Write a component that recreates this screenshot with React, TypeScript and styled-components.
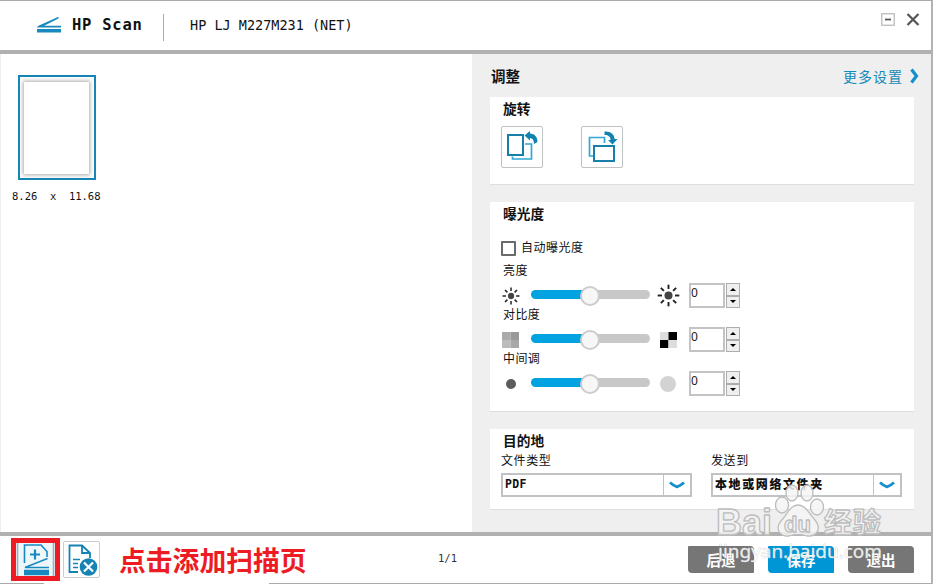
import React from "react";
import styled, { createGlobalStyle } from "styled-components";

const cjk = '"Noto Sans CJK SC", sans-serif';
const mono = '"DejaVu Sans Mono", "Noto Sans CJK SC", monospace';

const GlobalStyle = createGlobalStyle`
  * { box-sizing: border-box; }
  body { margin: 0; background: #fff; font-family: ${cjk}; color: #111; }
  button { padding: 0; font: inherit; }
  svg { display: block; flex: none; }
`;

const Window = styled.div`
  position: relative;
  width: 933px;
  height: 584px;
  overflow: hidden;
  display: flex;
  flex-direction: column;
  background: #fff;
  border-top: 1px solid #aaa;
  border-right: 2px solid #b2b2b2;
`;

const Header = styled.header`
  height: 53px;
  flex: none;
  display: flex;
  align-items: flex-start;
  padding: 0 11px 0 37px;
  border-bottom: 4px solid #b0b0b0;
`;

const Logo = styled.svg`
  margin-top: 15px;
`;

const Brand = styled.h1`
  margin: 14px 0 0 10px;
  width: 91px;
  font: bold 15.5px/20px ${mono};
  letter-spacing: 0.75px;
  white-space: nowrap;
`;

const HeaderDivider = styled.div`
  width: 1px;
  height: 27px;
  margin-top: 13px;
  background: #aaa;
`;

const Device = styled.div`
  margin: 14px auto 0 26px;
  font: 13.5px/20px ${mono};
  white-space: pre;
`;

const WindowControls = styled.div`
  display: flex;
  align-items: center;
  gap: 11px;
  margin-top: 11px;
`;

const Main = styled.main`
  height: 478px;
  flex: none;
  display: grid;
  grid-template-columns: 472px 1fr;
`;

const Preview = styled.section`
  padding: 21px 0 0 12px;
  border-left: 1px solid #eee;
`;

const Thumb = styled.div`
  width: 78px;
  height: 105px;
  margin-left: 5px;
  padding: 5px 5px 4px 4px;
  border: 2px solid #1585b5;
  background: #fff;
`;

const Sheet = styled.div`
  height: 100%;
  background: #fff;
  box-shadow: 0 0 4px 1px #aaa;
`;

const PageSize = styled.div`
  margin-top: 9px;
  margin-left: -1px;
  font: 10.5px/14px ${mono};
  white-space: pre;
`;

const Settings = styled.aside`
  padding: 0 18px;
  background: #efefef;
`;

const SettingsHead = styled.div`
  height: 43px;
  display: flex;
  align-items: center;
  justify-content: space-between;
  margin-right: -6px;
  padding-left: 1px;
`;

const Heading = styled.h2`
  margin: 0;
  font: bold 14.5px/20px ${cjk};
`;

const More = styled.a`
  display: flex;
  align-items: center;
  gap: 7px;
  color: #138ab8;
  font: 14px/20px ${cjk};
  letter-spacing: 1px;
`;

const Card = styled.section<{ $height: number }>`
  width: 424px;
  height: ${(p) => p.$height}px;
  margin-bottom: 17px;
  padding-left: 11px;
  background: #fff;
  border-bottom: 1px solid #dedede;
`;

const CardTitle = styled.h3`
  margin: 0;
  padding-left: 2px;
  font: bold 13.7px/22px ${cjk};
`;

const RotateRow = styled.div`
  display: flex;
  gap: 38px;
  margin-top: 7px;
`;

const RotateButton = styled.button`
  width: 42px;
  height: 42px;
  border: 1px solid #bfc3c4;
  border-radius: 2px;
  background: #fff;
`;

const AutoRow = styled.label`
  display: flex;
  gap: 5px;
  height: 18px;
  margin: 16px 0 6px;
  font: 12px/14px ${cjk};
  letter-spacing: 0.5px;
`;

const Checkbox = styled.span`
  width: 15px;
  height: 15px;
  margin-top: 1px;
  border: 2px solid #6a6a6a;
  border-radius: 1px;
  background: #fff;
`;

const SliderLabel = styled.div`
  height: 12px;
  padding-left: 2px;
  font: 12px/12px ${cjk};
  letter-spacing: 0.4px;
`;

const SliderRow = styled.div`
  display: grid;
  grid-template-columns: 30px 125px 33px 37px 14px;
  height: 25px;
  margin-top: 7px;
  align-items: center;
`;

const Track = styled.div`
  width: 119px;
  height: 9px;
  margin-top: -2px;
  display: flex;
  align-items: center;
  border-radius: 5px;
  background: linear-gradient(to right, #00a2e0 50%, #c8c8c8 50%);
`;

const Knob = styled.span`
  width: 20px;
  height: 20px;
  margin: 3px 0 0 49px;
  flex: none;
  border: 2px solid #ccc;
  border-radius: 50%;
  background: #f7f7f7;
`;

const NumberBox = styled.div`
  width: 36px;
  height: 25px;
  border: 2px solid #c4c4c4;
  font: 12px/15px "Noto Sans", sans-serif;
  color: #222;
`;

const Stepper = styled.div`
  display: grid;
  grid-template-rows: 1fr 1fr;
  height: 25px;
`;

const Step = styled.button`
  display: grid;
  place-items: center;
  border: 1px solid #adadad;
  background: #efefef;
`;

const FieldRow = styled.div`
  display: flex;
  gap: 19px;
`;

const Field = styled.div`
  width: 191px;
`;

const FieldLabel = styled.div`
  height: 18px;
  margin-bottom: 4px;
  font: 12px/18px ${cjk};
  letter-spacing: 0.6px;
`;

const Select = styled.div`
  height: 24px;
  display: flex;
  border: 2px solid #c0c2c3;
`;

const SelectValue = styled.div<{ $mono?: boolean }>`
  flex: 1;
  padding-left: 2px;
  font: ${(p) => (p.$mono ? `bold 11.5px/19px ${mono}` : `900 12px/18px ${cjk}`)};
  letter-spacing: ${(p) => (p.$mono ? 0.3 : 1.6)}px;
`;

const SelectArrow = styled.div`
  width: 27px;
  display: grid;
  place-items: center;
  border-left: 1px solid #c0c2c3;
`;

const Footer = styled.footer`
  flex: 1;
  display: flex;
  align-items: flex-start;
  border-top: 4px solid #b0b0b0;
  padding: 2px 17px 0 11px;
`;

const AddButton = styled.button`
  width: 49px;
  height: 43px;
  border: 5px solid #ed1c24;
  background: #edf6f9;
`;

const DeleteButton = styled.button`
  width: 37px;
  height: 37px;
  margin: 3px 0 0 3px;
  border: 1px solid #ccc;
  border-radius: 2px;
  background: #fff;
`;

const Annotation = styled.div`
  width: 188px;
  margin: 4px 0 0 19px;
  color: #ed1c24;
  font: bold 26.8px/36px ${cjk};
  white-space: nowrap;
`;

const PageCount = styled.div`
  margin: 13px auto 0 131px;
  font: 10.5px/14px ${mono};
  color: #333;
`;

const Actions = styled.div`
  display: flex;
  gap: 14px;
  margin-top: 8px;
`;

const Action = styled.button<{ $primary?: boolean }>`
  width: 66px;
  height: 27px;
  border: 0;
  border-radius: 1px 4px 1px 4px;
  background: ${(p) => (p.$primary ? "#0096d6" : "#767676")};
  color: #fff;
  font: bold 14.5px/25px ${cjk};
`;

const BottomEdge = styled.div`
  height: 1px;
  flex: none;
  background: linear-gradient(to right, #aaa 44px, #fff 44px 269px, #aaa 269px);
`;

const Watermark = styled.svg`
  position: absolute;
  left: 708px;
  top: 479px;
  pointer-events: none;
`;

const ScanLogo = () => (
  <Logo width="25" height="18" viewBox="0 0 25 18" fill="#1689c0">
    <path d="M1 10 21.500 .8V2.500L7 9.700H24V11.500H0z" />
    <path d="M0 13H24V16.500H0z" />
  </Logo>
);

const RotateLeft = () => (
  <svg width="40" height="40" viewBox="0 0 40 40" fill="none">
    <path d="M23 17H29.500V32H10.500V29.500" stroke="#32a8d4" strokeWidth="1.700" />
    <path d="M6 8H21V28H6z" stroke="#187faa" strokeWidth="2" />
    <path d="M22.500 8.500 28 4V6.500C32.500 6.500 35.500 10 35.500 15L32 17C32 13 30.500 11 28 11V13.500z" fill="#1183b0" />
  </svg>
);

const RotateRight = () => (
  <svg width="40" height="40" viewBox="0 0 40 40" fill="none">
    <path d="M11 29H7.500V10.500H22.500V16" stroke="#32a8d4" strokeWidth="1.700" />
    <path d="M12 19H32V34H12z" stroke="#187faa" strokeWidth="2" />
    <path d="M22.500 4.500C28.500 4 32.500 7.500 32.500 12H35.500L30.500 17.500 26 13H28.500C28.500 10 26.500 8 22.500 8z" fill="#1183b0" />
  </svg>
);

const Sun = ({ size }: { size: number }) => (
  <svg width={size} height={size} viewBox="-12 -12 24 24" stroke="#222" strokeWidth="2">
    <circle r="4.2" fill="#444" stroke="none" />
    {[0, 45, 90, 135, 180, 225, 270, 315].map((a) => (
      <path key={a} d="M0-6.8V-11.3" transform={`rotate(${a})`} />
    ))}
  </svg>
);

const Checker = ({ colors }: { colors: string[] }) => (
  <svg width="17" height="16" viewBox="0 0 17 16">
    {colors.map((c, i) => (
      <rect key={i} x={(i % 2) * 8.5} y={i > 1 ? 8 : 0} width="8.5" height="8" fill={c} />
    ))}
  </svg>
);

const Dot = ({ r, color }: { r: number; color: string }) => (
  <svg width="18" height="18" viewBox="-9 -9 18 18">
    <circle r={r} fill={color} />
  </svg>
);

const Cell = styled.div<{ $width: number }>`
  width: ${(p) => p.$width}px;
  height: 24px;
  display: grid;
  place-items: center;
`;

const DownArrow = () => (
  <svg width="16" height="8" viewBox="0 0 16 8" fill="none" stroke="#1590cc" strokeWidth="2.8">
    <path d="M1 1.500 Q4.500 4.800 8 5.800 Q11.500 4.800 15 1.500" />
  </svg>
);

const SliderControl = ({ label, low, high }: { label: string; low: React.ReactNode; high: React.ReactNode }) => (
  <>
    <SliderLabel>{label}</SliderLabel>
    <SliderRow>
      <Cell $width={19}>{low}</Cell>
      <Track><Knob /></Track>
      <Cell $width={24}>{high}</Cell>
      <NumberBox>0</NumberBox>
      <Stepper>
        <Step><svg width="6" height="3" viewBox="0 0 6 3"><path d="M0 3 3 0 6 3z" /></svg></Step>
        <Step><svg width="6" height="3" viewBox="0 0 6 3"><path d="M0 0 3 3 6 0z" /></svg></Step>
      </Stepper>
    </SliderRow>
  </>
);

const AddPageIcon = () => (
  <svg width="39" height="33" viewBox="0 0 39 33" fill="none" stroke="#168ac0" strokeWidth="1.6">
    <path d="M1.500 0V33M37.500 0V33" stroke="#9fb0b8" />
    <path d="M8.500 20V2H25L31 8.500V14" />
    <path d="M19 6.500V16.500M14 11.500H24" strokeWidth="2.2" />
    <path d="M31.500 15.500 9 24.500H33" strokeWidth="1.500" />
    <path d="M8 29.500H33" strokeWidth="5.500" />
  </svg>
);

const DeletePageIcon = () => (
  <svg width="35" height="35" viewBox="0 0 35 35" fill="none" stroke="#1683b5">
    <path d="M14 30H5.500V3.500H18L26 11V16M18 3.500V11H26" strokeWidth="1.800" />
    <path d="M9 17.500H16M9 21.500H14M9 25.500H14" strokeWidth="1.500" />
    <circle cx="24.500" cy="25" r="8.800" fill="#1683b5" stroke="none" />
    <path d="M20 20.500 29 29.500M29 20.500 20 29.500" stroke="#fff" strokeWidth="2.200" />
  </svg>
);

export default function App() {
  return (
    <>
      <GlobalStyle />
      <Window>
        <Header>
          <ScanLogo />
          <Brand>HP Scan</Brand>
          <HeaderDivider />
          <Device>HP LJ M227M231 (NET)</Device>
          <WindowControls>
            <svg width="14" height="13" viewBox="0 0 14 13" fill="none">
              <rect x=".75" y=".75" width="12.500" height="11.500" stroke="#bbb" strokeWidth="1.300" />
              <path d="M4 6.500H10" stroke="#555" strokeWidth="1.800" />
            </svg>
            <svg width="14" height="14" viewBox="0 0 14 14" stroke="#555" strokeWidth="2.200">
              <path d="M1.500 2 12.500 13M12.500 2 1.500 13" />
            </svg>
          </WindowControls>
        </Header>
        <Main>
          <Preview>
            <Thumb><Sheet /></Thumb>
            <PageSize>8.26  x  11.68</PageSize>
          </Preview>
          <Settings>
            <SettingsHead>
              <Heading>调整</Heading>
              <More>
                更多设置
                <svg width="10" height="16" viewBox="0 0 10 16" fill="none" stroke="#138ecb" strokeWidth="3.200">
                  <path d="M1.500 1.500 6.500 8 1.500 14.500" />
                </svg>
              </More>
            </SettingsHead>
            <Card $height={88}>
              <CardTitle>旋转</CardTitle>
              <RotateRow>
                <RotateButton><RotateLeft /></RotateButton>
                <RotateButton><RotateRight /></RotateButton>
              </RotateRow>
            </Card>
            <Card $height={210}>
              <CardTitle>曝光度</CardTitle>
              <AutoRow><Checkbox />自动曝光度</AutoRow>
              <SliderControl label="亮度" low={<Sun size={18} />} high={<Sun size={23} />} />
              <SliderControl
                label="对比度"
                low={<Checker colors={["#aaa", "#999", "#bbb", "#a8a8a8"]} />}
                high={<Checker colors={["#ddd", "#000", "#000", "#ddd"]} />}
              />
              <SliderControl label="中间调" low={<Dot r={5} color="#5c5c5c" />} high={<Dot r={8} color="#d3d3d3" />} />
            </Card>
            <Card $height={81}>
              <CardTitle>目的地</CardTitle>
              <FieldRow>
                <Field>
                  <FieldLabel>文件类型</FieldLabel>
                  <Select><SelectValue $mono>PDF</SelectValue><SelectArrow><DownArrow /></SelectArrow></Select>
                </Field>
                <Field>
                  <FieldLabel>发送到</FieldLabel>
                  <Select><SelectValue>本地或网络文件夹</SelectValue><SelectArrow><DownArrow /></SelectArrow></Select>
                </Field>
              </FieldRow>
            </Card>
          </Settings>
        </Main>
        <Footer>
          <AddButton><AddPageIcon /></AddButton>
          <DeleteButton><DeletePageIcon /></DeleteButton>
          <Annotation>点击添加扫描页</Annotation>
          <PageCount>1/1</PageCount>
          <Actions>
            <Action>后退</Action>
            <Action $primary>保存</Action>
            <Action>退出</Action>
          </Actions>
        </Footer>
        <BottomEdge />
        <Watermark width="190" height="90" viewBox="0 0 190 90">
          <g fill="#f4f4f4" fillOpacity=".85" stroke="#bdbdbd" strokeWidth="1.300" strokeLinejoin="round">
            <text x="8" y="55" fontFamily="Liberation Sans" fontWeight="bold" fontSize="36" textLength="56" lengthAdjust="spacingAndGlyphs">Bai</text>
            <ellipse cx="74" cy="25" rx="6.500" ry="8" />
            <ellipse cx="84" cy="13" rx="6" ry="8" />
            <ellipse cx="99" cy="13" rx="6" ry="8" />
            <ellipse cx="109" cy="27" rx="6.500" ry="8" />
            <path d="M90 25C98 25 101 34 107 40C114 48 109 57 99 56C92 54 87 54 81 56C71 57 67 48 73 41C79 35 82 25 90 25z" />
            <text x="76" y="52" fontFamily="Liberation Sans" fontWeight="bold" fontSize="22" textLength="27">du</text>
            <text x="116" y="53" fontFamily="Noto Sans CJK SC" fontWeight="bold" fontSize="28" textLength="57">经验</text>
          </g>
          <text x="10" y="78" fill="#fff" fillOpacity=".85" stroke="#bbb" strokeWidth=".5" paintOrder="stroke" fontFamily="Noto Sans" fontSize="18" textLength="164" lengthAdjust="spacingAndGlyphs">jingyan.baidu.com</text>
        </Watermark>
      </Window>
    </>
  );
}
